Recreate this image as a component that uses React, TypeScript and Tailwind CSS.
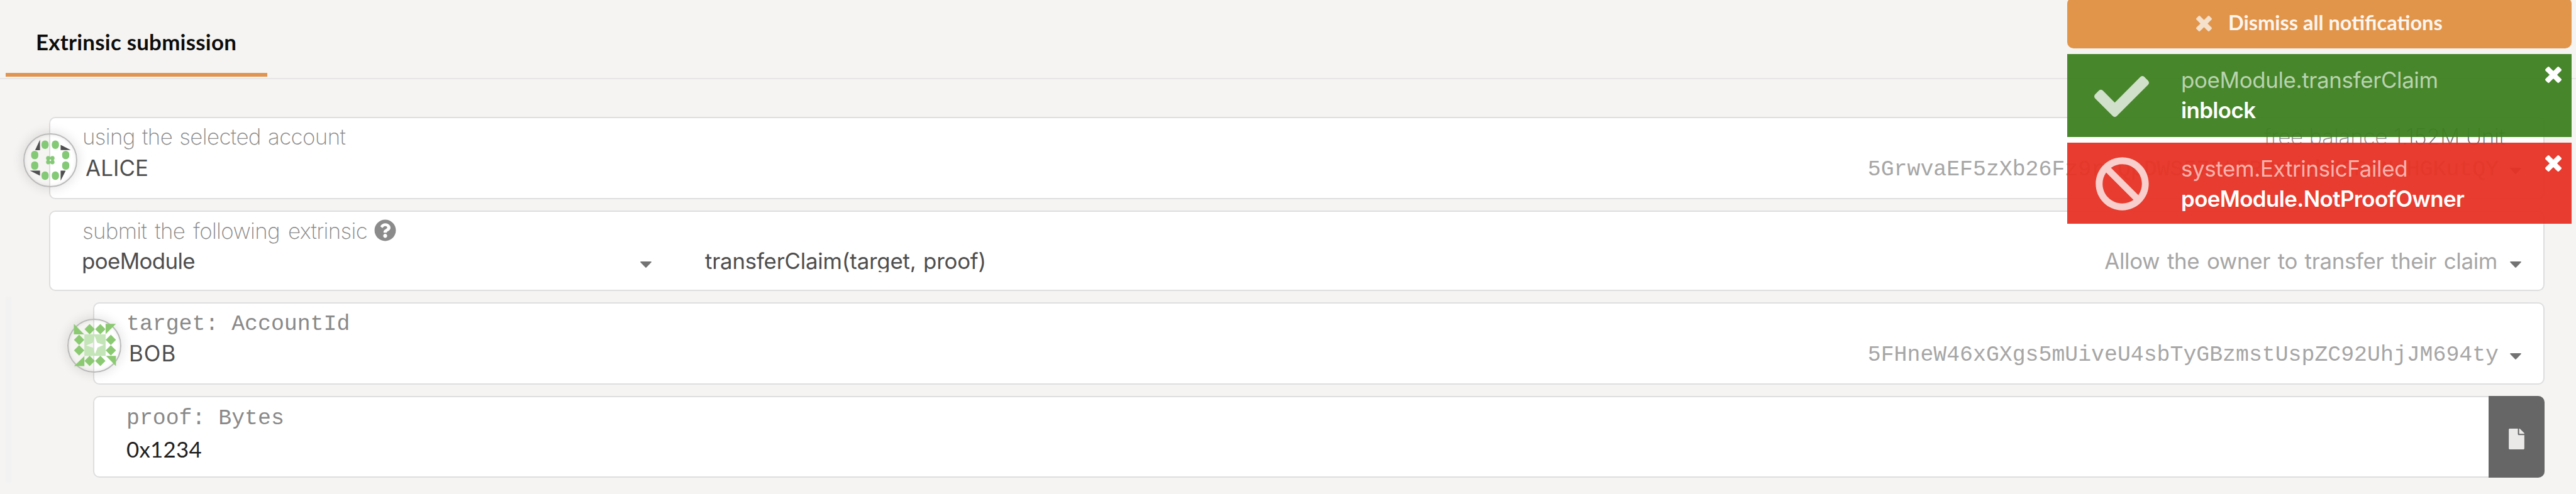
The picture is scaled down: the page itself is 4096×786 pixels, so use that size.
import type { ReactNode } from "react";
import { FaBan, FaCheck, FaFile, FaQuestionCircle } from "react-icons/fa";

const MONO = "font-['Liberation_Mono',monospace]";
const LATO = "font-['Lato',sans-serif]";

function Cross({ className }: { className: string }) {
  return (
    <svg viewBox="0 64 384 384" fill="currentColor" className={className}>
      <path d="M323.1 441l53.9-53.9c9.4-9.4 9.4-24.5 0-33.9L279.8 256l97.2-97.2c9.4-9.4 9.4-24.5 0-33.9L323.1 71c-9.4-9.4-24.5-9.4-33.9 0L192 168.2 94.8 71c-9.4-9.4-24.5-9.4-33.9 0L7 124.9c-9.4 9.4-9.4 24.5 0 33.9l97.2 97.2L7 353.2c-9.4 9.4-9.4 24.5 0 33.9L60.9 441c9.4 9.4 24.5 9.4 33.9 0l97.2-97.2 97.2 97.2c9.3 9.3 24.5 9.3 33.9 0z" />
    </svg>
  );
}

function Caret({ className = "" }: { className?: string }) {
  return (
    <svg viewBox="0 0 18 10" className={`h-[10px] w-[18px] shrink-0 fill-[#737373] ${className}`}>
      <path d="M1 0H17Q18.4 0.3 17.5 1.4L9.8 9.5Q9 10.3 8.2 9.5L0.5 1.4Q-0.4 0.3 1 0Z" />
    </svg>
  );
}

function Identicon({ children }: { children: ReactNode }) {
  return (
    <div className="absolute -left-[43px] top-[24px] h-[86px] w-[86px] rounded-full border-2 border-[#bbbaba] shadow-[0_0_16px_4px_rgba(0,0,0,0.09),inset_0_0_5px_1px_rgba(0,0,0,0.07)]">
      <div className="-m-[2px] h-[86px] w-[86px]">{children}</div>
    </div>
  );
}

function AliceIcon() {
  const dots = [[182, 148], [237, 148], [127, 203], [292, 203], [127, 259], [292, 259], [182, 313], [237, 313]];
  return (
    <Identicon>
      <svg viewBox="66 87 288 288" className="h-full w-full">
        <g fill="#84c976">
          {dots.map(([x, y]) => (
            <rect key={`${x}-${y}`} x={x - 19} y={y - 22.5} width="38" height="45" rx="18" ry="19" />
          ))}
          <circle cx="199" cy="220" r="11.5" />
          <circle cx="221" cy="220" r="11.5" />
          <circle cx="199" cy="241" r="11.5" />
          <circle cx="221" cy="241" r="11.5" />
        </g>
        <path fill="#fff" d="M210 226l5 5-5 5-5-5z" />
        <path fill="#4f4f50" d="M129 177L155 121V177ZM265 149L319 176.500H265ZM101 286H155V313ZM265 286H292L265 340Z" />
      </svg>
    </Identicon>
  );
}

function BobIcon() {
  const diamonds = [[179, 119], [236, 119], [123, 176], [292, 176], [123, 232], [292, 232], [179, 288], [236, 288]];
  return (
    <Identicon>
      <svg viewBox="60 63 288 288" className="h-full w-full">
        <path
          fill="#c4e5b8"
          fillRule="evenodd"
          d="M151 147H264V261H151ZM206 155L219 191L254 203L221 217L208 251L196 217L160 206L196 191Z"
        />
        <g fill="#8bca72">
          {diamonds.map(([x, y]) => (
            <path key={`${x}-${y}`} d={`M${x} ${y - 27.5}L${x + 27.5} ${y}L${x} ${y + 27.5}L${x - 27.5} ${y}Z`} />
          ))}
          <path d="M95 91V147H150ZM264 91H319L264 146ZM151 262V316H96ZM266 261H319V316Z" />
        </g>
      </svg>
    </Identicon>
  );
}

function Card({ className, children }: { className: string; children: ReactNode }) {
  return (
    <section className={`relative rounded-[10px] border-2 border-[#dededf] bg-white pl-[51px] ${className}`}>
      {children}
    </section>
  );
}

function Toast(props: { className: string; titleColor: string; icon: ReactNode; title: string; status: string }) {
  return (
    <div className={`flex pr-[16px] ${props.className}`}>
      <div className="w-[181px] pl-[43px]">{props.icon}</div>
      <div className="flex-1 pt-[17px] leading-[48px] whitespace-nowrap">
        <div className={`tracking-[-0.33px] ${props.titleColor}`}>{props.title}</div>
        <div className="font-semibold tracking-[-0.6px] text-white">{props.status}</div>
      </div>
      <Cross className="mt-[20px] h-[26px] w-[26px] text-white" />
    </div>
  );
}

export default function App() {
  return (
    <div className="relative h-[786px] w-[4096px] overflow-hidden bg-[#f5f4f2] font-['Inter',sans-serif] text-[34.84px] text-[#4e4e4e]">
      <header className="h-[126px] border-b-2 border-[#e7e5e6] pl-[9px]">
        <div
          className={`h-[122px] w-[416px] border-b-[6px] border-[#e0944f] pt-[47px] pl-[48px] leading-[40px] font-bold tracking-[0.26px] whitespace-nowrap text-[#0d0d0d] ${LATO}`}
        >
          Extrinsic submission
        </div>
      </header>

      <main className="pt-[60px] pr-[50px]">
        <Card className="ml-[78px] h-[131px] pt-[4px] pr-[35px]">
          <AliceIcon />
          <div className="flex justify-between pr-[26px] leading-[50px] font-[150] whitespace-nowrap text-[#8a8a8a]">
            <span className="tracking-[-0.6px] [word-spacing:2px]">using the selected account</span>
            <span className="tracking-[-0.15px]">
              free balance <span className="text-[#666666]">1.152M Unit</span>
            </span>
          </div>
          <div className="flex items-start">
            <span className="ml-[5px] flex-1 leading-[51px] tracking-[0.1px]">ALICE</span>
            <span className={`leading-[55px] text-[#a6a6a6] ${MONO}`}>
              5GrwvaEF5zXb26Fz9rcQpDWS57CtERHpNehXCPcNoHGKutQY
            </span>
            <Caret className="mt-[25px] ml-[18px]" />
          </div>
        </Card>

        <Card className="mt-[18px] ml-[78px] h-[128px] pt-[5px] pr-[35px]">
          <div className="flex items-start leading-[50px] font-[150] whitespace-nowrap text-[#8a8a8a]">
            <span className="w-[464px] tracking-[-0.65px] [word-spacing:4px]">submit the following extrinsic</span>
            <FaQuestionCircle className="mt-[7px] h-[35px] w-[35px] text-[#8b8b8b]" />
          </div>
          <div className="flex items-start leading-[46px] whitespace-nowrap">
            <div className="flex w-[990px] items-start justify-between pr-[85px]">
              <span className="-ml-px tracking-[-0.62px]">poeModule</span>
              <Caret className="mt-[24px]" />
            </div>
            <div className="h-[41px] flex-1 overflow-hidden tracking-[-0.22px] [word-spacing:2px]">
              transferClaim(target, proof)
            </div>
            <span className="tracking-[-0.33px] [word-spacing:2.2px] text-[#a6a6a6]">
              Allow the owner to transfer their claim
            </span>
            <Caret className="mt-[24px] ml-[20px]" />
          </div>
        </Card>

        <div className="mt-[9px] ml-[9px] border-l-[9px] border-[#f2f2f3] pt-[9px] pb-[8px] pl-[130px]">
          <Card className="h-[131px] pt-[8px] pr-[35px]">
            <BobIcon />
            <div className={`leading-[50px] text-[#898989] ${MONO}`}>target: AccountId</div>
            <div className="flex items-start">
              <span className="ml-[4px] flex-1 leading-[42px] tracking-[1px]">BOB</span>
              <span className={`leading-[48px] text-[#a6a6a6] ${MONO}`}>
                5FHneW46xGXgs5mUiveU4sbTyGBzmstUspZC92UhjJM694ty
              </span>
              <Caret className="mt-[21px] ml-[18px]" />
            </div>
          </Card>

          <Card className="mt-[18px] flex h-[130px]">
            <div className="flex-1 pt-[9px]">
              <div className={`leading-[50px] text-[#898989] ${MONO}`}>proof: Bytes</div>
              <div className={`leading-[47px] tracking-[0.25px] text-[#1f1f1f] ${LATO}`}>0x1234</div>
            </div>
            <div className="-my-[2px] -mr-[2px] flex w-[89px] items-center justify-center rounded-r-[10px] bg-[#666666]">
              <FaFile className="mt-[6px] h-[33px] w-[25px] text-[#ebe9e8]" />
            </div>
          </Card>
        </div>
      </main>

      <aside className="absolute top-0 right-[7px] flex w-[802px] flex-col gap-[9px]">
        <div className="-mt-[4px] flex h-[81px] rounded-[10px] bg-[#df8f41]/95 pt-[20px] pl-[205px]">
          <Cross className="mt-[9px] h-[25px] w-[25px] text-[#f4e0cb]" />
          <span className={`ml-[26px] text-[32.5px] leading-[40px] font-bold whitespace-nowrap text-[#fdf6ef] ${LATO}`}>
            Dismiss all notifications
          </span>
        </div>
        <Toast
          className="h-[132px] bg-[#3d7f20]/95"
          titleColor="text-[#b9d3af]"
          icon={<FaCheck className="mt-[24px] h-[87px] w-[87px] text-[#d0e0ca]" />}
          title="poeModule.transferClaim"
          status="inblock"
        />
        <Toast
          className="h-[129px] bg-[#e63124]/95"
          titleColor="text-[#fbb3ad]"
          icon={<FaBan className="mt-[22px] ml-px h-[87px] w-[87px] text-[#f8cfcc]" />}
          title="system.ExtrinsicFailed"
          status="poeModule.NotProofOwner"
        />
      </aside>
    </div>
  );
}
